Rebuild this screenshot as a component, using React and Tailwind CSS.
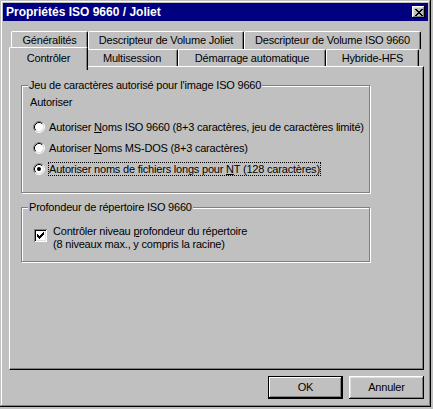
import React from "react";

// Win95-style bevels
const raised = "shadow-[inset_-1px_-1px_0_#000,inset_1px_1px_0_#fff,inset_-2px_-2px_0_#808080,inset_2px_2px_0_#dfdfdf]";
const sunken = "shadow-[inset_1px_1px_0_#808080,inset_-1px_-1px_0_#fff,inset_2px_2px_0_#000,inset_-2px_-2px_0_#dfdfdf]";
const etched = "border border-[#808080] shadow-[1px_1px_0_#fff,inset_1px_1px_0_#fff]";

const row1 = [
  { label: "Généralités", w: "w-[77px]" },
  { label: "Descripteur de Volume Joliet", w: "w-[156px]" },
  { label: "Descripteur de Volume ISO 9660", w: "w-[177px]" },
];

const row2 = [
  { label: "Contrôler", w: "w-[77px]", active: true },
  { label: "Multisession", w: "w-[92px]" },
  { label: "Démarrage automatique", w: "w-[148px]" },
  { label: "Hybride-HFS", w: "w-[93px]" },
];

const CloseGlyph = () => (
  <svg width="8" height="7" viewBox="0 0 8 7" shapeRendering="crispEdges">
    <path
      fill="#000"
      d="M0 0h2v1H0z M6 0h2v1H6z M1 1h2v1H1z M5 1h2v1H5z M2 2h4v1H2z M3 3h2v1H3z M2 4h4v1H2z M1 5h2v1H1z M5 5h2v1H5z M0 6h2v1H0z M6 6h2v1H6z"
    />
  </svg>
);

const Radio = ({ checked }) => (
  <svg width="12" height="12" viewBox="0 0 12 12" className="shrink-0">
    <circle cx="6" cy="6" r="4.5" fill="#fff" />
    <path d="M2.11 9.89 A5.5 5.5 0 0 1 9.89 2.11" fill="none" stroke="#808080" />
    <path d="M9.89 2.11 A5.5 5.5 0 0 1 2.11 9.89" fill="none" stroke="#fff" />
    <path d="M2.82 9.18 A4.5 4.5 0 0 1 9.18 2.82" fill="none" stroke="#000" />
    <path d="M9.18 2.82 A4.5 4.5 0 0 1 2.82 9.18" fill="none" stroke="#dfdfdf" />
    {checked && <circle cx="6" cy="6" r="2" fill="#000" />}
  </svg>
);

const Checkbox = ({ checked }) => (
  <div className={`w-[13px] h-[13px] shrink-0 bg-white flex items-center justify-center ${sunken}`}>
    {checked && (
      <svg width="7" height="7" viewBox="0 0 7 7" shapeRendering="crispEdges">
        <path
          fill="#000"
          d="M6 0h1v1H6z M5 1h2v1H5z M0 2h1v1H0z M4 2h3v1H4z M0 3h2v1H0z M3 3h3v1H3z M0 4h5v1H0z M1 5h3v1H1z M2 6h1v1H2z"
        />
      </svg>
    )}
  </div>
);

const Tab = ({ label, w, active }) => (
  <div
    className={`${w} flex items-center justify-center bg-[#c0c0c0] border-t border-l border-white border-r border-r-black rounded-tl-[2px] rounded-tr-[2px] shadow-[inset_-1px_0_0_#808080] ${
      active ? "relative z-10 h-[20px] -mt-[2px] -mx-[2px] pb-[2px] box-content" : "h-full"
    }`}
  >
    <span className="whitespace-nowrap">{label}</span>
  </div>
);

const GroupBox = ({ title, className, children }) => (
  <div className={`${etched} ${className}`}>
    <div className="ml-[6px] -mt-[7px] px-[1px] w-fit bg-[#c0c0c0] leading-[13px] whitespace-nowrap">{title}</div>
    {children}
  </div>
);

const RadioRow = ({ checked, focused, children }) => (
  <div className="flex items-center h-[13px] ml-[11px]">
    <Radio checked={checked} />
    <span
      className={`ml-[3px] leading-[12px] border border-dotted whitespace-nowrap ${
        focused ? "border-black" : "border-transparent"
      }`}
    >
      {children}
    </span>
  </div>
);

const Ul = ({ children }) => <span className="underline underline-offset-[1px]">{children}</span>;

export default function App() {
  return (
    <div className="w-[433px] h-[409px] bg-[#c0c0c0] font-['Liberation_Sans',Arial,sans-serif] text-[11px] text-black tracking-[-0.2px]">
      <div className="w-[431px] h-[407px] p-[3px] flex flex-col shadow-[inset_-1px_-1px_0_#000,inset_1px_1px_0_#c0c0c0,inset_-2px_-2px_0_#808080,inset_2px_2px_0_#fff]">
        {/* title bar */}
        <div className="h-[18px] bg-[#000080] flex items-center justify-between pl-[3px] pr-[3px]">
          <span className="text-white font-bold text-[12px] tracking-normal leading-none">Propriétés ISO 9660 / Joliet</span>
          <button className={`w-[13px] h-[12px] bg-[#c0c0c0] flex items-center justify-center ${raised}`}>
            <CloseGlyph />
          </button>
        </div>

        <div className="ml-[6px] mt-[10px] w-[415px]">
          {/* tabs */}
          <div className="flex h-[18px] pl-[2px]">
            {row1.map((t) => (
              <Tab key={t.label} {...t} />
            ))}
          </div>
          <div className="flex h-[17px] pl-[2px]">
            {row2.map((t) => (
              <Tab key={t.label} {...t} />
            ))}
          </div>

          {/* panel */}
          <div className="h-[304px] border-l border-t border-white border-r border-b border-r-black border-b-black shadow-[inset_-1px_-1px_0_#808080] flex flex-col">
            <GroupBox title="Jeu de caractères autorisé pour l'image ISO 9660" className="ml-[11px] mt-[18px] w-[349px] h-[108px]">
              <div className="ml-[8px] mt-[4px] leading-[13px]">Autoriser</div>
              <div className="mt-[11px] flex flex-col gap-[8px]">
                <RadioRow>
                  Autoriser <Ul>N</Ul>oms ISO 9660 (8+3 caractères, jeu de caractères limité)
                </RadioRow>
                <RadioRow>
                  Autoriser <Ul>N</Ul>oms MS-DOS (8+3 caractères)
                </RadioRow>
                <RadioRow checked focused>
                  Autoriser noms de fichiers longs pour <Ul>N</Ul>T (128 caractères)
                </RadioRow>
              </div>
            </GroupBox>

            <GroupBox title="Profondeur de répertoire ISO 9660" className="ml-[11px] mt-[14px] w-[349px] h-[55px]">
              <div className="flex items-start ml-[12px] mt-[11px]">
                <div className="mt-[4px]">
                  <Checkbox checked />
                </div>
                <div className="ml-[6px] leading-[13px]">
                  <div>
                    Contrôler niveau <Ul>p</Ul>rofondeur du répertoire
                  </div>
                  <div>(8 niveaux max., y compris la racine)</div>
                </div>
              </div>
            </GroupBox>
          </div>

          {/* buttons */}
          <div className="mt-[6px] flex justify-end gap-[6px]">
            <button className="w-[75px] h-[23px] border border-black bg-[#c0c0c0] shadow-[inset_-1px_-1px_0_#000,inset_1px_1px_0_#fff,inset_-2px_-2px_0_#808080]">
              OK
            </button>
            <button className={`w-[75px] h-[23px] bg-[#c0c0c0] ${raised}`}>Annuler</button>
          </div>
        </div>
      </div>
    </div>
  );
}
